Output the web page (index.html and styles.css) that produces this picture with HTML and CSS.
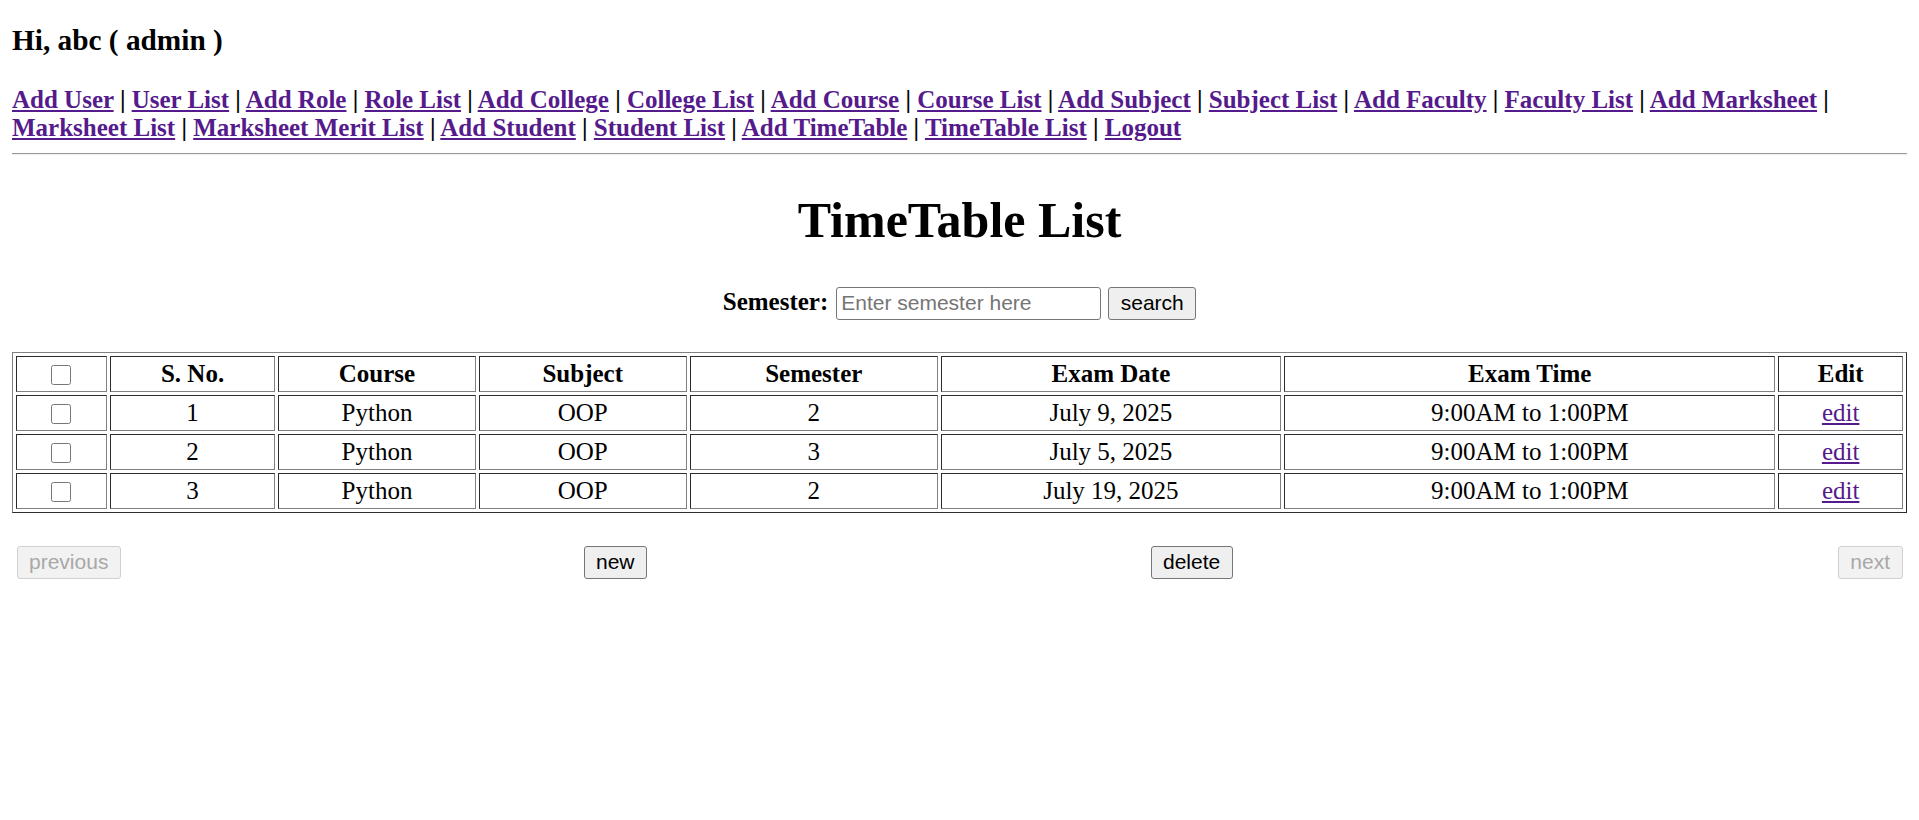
FILE: index.html
```html
<!DOCTYPE html>
<html lang="en">
<head>
<meta charset="utf-8">
<title>TimeTable List</title>
<link rel="stylesheet" href="styles.css">
</head>
<body>
<header class="site-header">
  <h3 class="greeting">Hi, abc ( admin )</h3>
  <nav class="menu">
    <a href="#">Add User</a> | <a href="#">User List</a> | <a href="#">Add Role</a> | <a href="#">Role List</a> | <a href="#">Add College</a> | <a href="#">College List</a> | <a href="#">Add Course</a> | <a href="#">Course List</a> | <a href="#">Add Subject</a> | <a href="#">Subject List</a> | <a href="#">Add Faculty</a> | <a href="#">Faculty List</a> | <a href="#">Add Marksheet</a> | <a href="#">Marksheet List</a> | <a href="#">Marksheet Merit List</a> | <a href="#">Add Student</a> | <a href="#">Student List</a> | <a href="#">Add TimeTable</a> | <a href="#">TimeTable List</a> | <a href="#">Logout</a>
  </nav>
  <hr class="rule">
</header>
<main class="content">
  <h1 class="title">TimeTable List</h1>
  <form class="search">
    <label class="search-label" for="sem">Semester:</label>
    <input id="sem" class="search-input" type="text" placeholder="Enter semester here">
    <button class="btn" type="button">search</button>
  </form>
  <table class="list">
    <colgroup>
      <col class="w-check">
      <col class="w-sno">
      <col class="w-course">
      <col class="w-subject">
      <col class="w-sem">
      <col class="w-date">
      <col class="w-time">
      <col class="w-edit">
    </colgroup>
    <thead>
      <tr>
        <th><input class="check" type="checkbox"></th>
        <th>S. No.</th>
        <th>Course</th>
        <th>Subject</th>
        <th>Semester</th>
        <th>Exam Date</th>
        <th>Exam Time</th>
        <th>Edit</th>
      </tr>
    </thead>
    <tbody>
      <tr>
        <td><input class="check" type="checkbox"></td>
        <td>1</td><td>Python</td><td>OOP</td><td>2</td><td>July 9, 2025</td><td>9:00AM to 1:00PM</td><td><a href="#">edit</a></td>
      </tr>
      <tr>
        <td><input class="check" type="checkbox"></td>
        <td>2</td><td>Python</td><td>OOP</td><td>3</td><td>July 5, 2025</td><td>9:00AM to 1:00PM</td><td><a href="#">edit</a></td>
      </tr>
      <tr>
        <td><input class="check" type="checkbox"></td>
        <td>3</td><td>Python</td><td>OOP</td><td>2</td><td>July 19, 2025</td><td>9:00AM to 1:00PM</td><td><a href="#">edit</a></td>
      </tr>
    </tbody>
  </table>
  <div class="pager">
    <div class="pager-cell"><button class="btn" type="button" disabled>previous</button></div>
    <div class="pager-cell"><button class="btn" type="button">new</button></div>
    <div class="pager-cell"><button class="btn" type="button">delete</button></div>
    <div class="pager-cell pager-end"><button class="btn" type="button" disabled>next</button></div>
  </div>
</main>
</body>
</html>
```
FILE: styles.css
```css
html, body {
  background: #ffffff;
}

body {
  margin: 0;
  padding: 12px;
  font-family: "Liberation Serif", "Times New Roman", serif;
  font-size: 25px;
  color: #000000;
}

.greeting {
  margin: 11.5px 0 29px;
  font-size: 29.3px;
  font-weight: bold;
}

.menu {
  font-weight: bold;
  line-height: 28.3px;
}

.menu a,
.list a {
  color: #551a8b;
}

.rule {
  margin: 11.3px 0 0;
  border: 0;
  border-top: 1px solid #9a9a9a;
  border-bottom: 1px solid #eeeeee;
  height: 0;
}

.title {
  margin: 36px 0 37.4px;
  font-size: 50px;
  font-weight: bold;
  text-align: center;
}

.search {
  display: flex;
  justify-content: center;
  align-items: baseline;
  margin: 0 0 32px;
}

.search-label {
  font-weight: bold;
  margin-right: 8px;
}

.search-input {
  box-sizing: border-box;
  width: 265px;
  height: 33px;
  margin: 0 7px 0 0;
  padding: 0 4px;
  border: 1px solid #767676;
  border-radius: 3px;
  font-family: "Liberation Sans", Arial, sans-serif;
  font-size: 21px;
  color: #000000;
  background: #ffffff;
}

.search-input::placeholder {
  color: #757575;
}

.btn {
  box-sizing: border-box;
  height: 33px;
  margin: 0;
  padding: 0 11.5px;
  border: 1px solid #767676;
  border-radius: 3px;
  background: #efefef;
  font-family: "Liberation Sans", Arial, sans-serif;
  font-size: 21px;
  color: #000000;
}

.btn:disabled {
  border-color: #d0d0d0;
  background: #f2f2f2;
  color: #a8a8a8;
}

.list {
  width: 100%;
  table-layout: fixed;
  border: 1px outset #808080;
  border-collapse: separate;
  border-spacing: 3px;
}

.w-check { width: 4.86%; }
.w-sno { width: 8.88%; }
.w-course { width: 10.57%; }
.w-subject { width: 11.16%; }
.w-sem { width: 13.28%; }
.w-date { width: 18.25%; }
.w-time { width: 26.32%; }
.w-edit { width: 6.68%; }

.list th,
.list td {
  border: 1px inset #808080;
  padding: 1.5px;
  text-align: center;
  line-height: 31px;
}

.list th {
  font-weight: bold;
}

.check {
  width: 20px;
  height: 20px;
  margin: 0 0 4px;
  vertical-align: middle;
}

.pager {
  display: grid;
  grid-template-columns: 3fr 3fr 3fr 1fr;
  gap: 3px;
  padding: 3px;
  margin-top: 28.5px;
}

.pager-cell {
  padding: 1.5px;
}

.pager-end {
  text-align: right;
}
```
